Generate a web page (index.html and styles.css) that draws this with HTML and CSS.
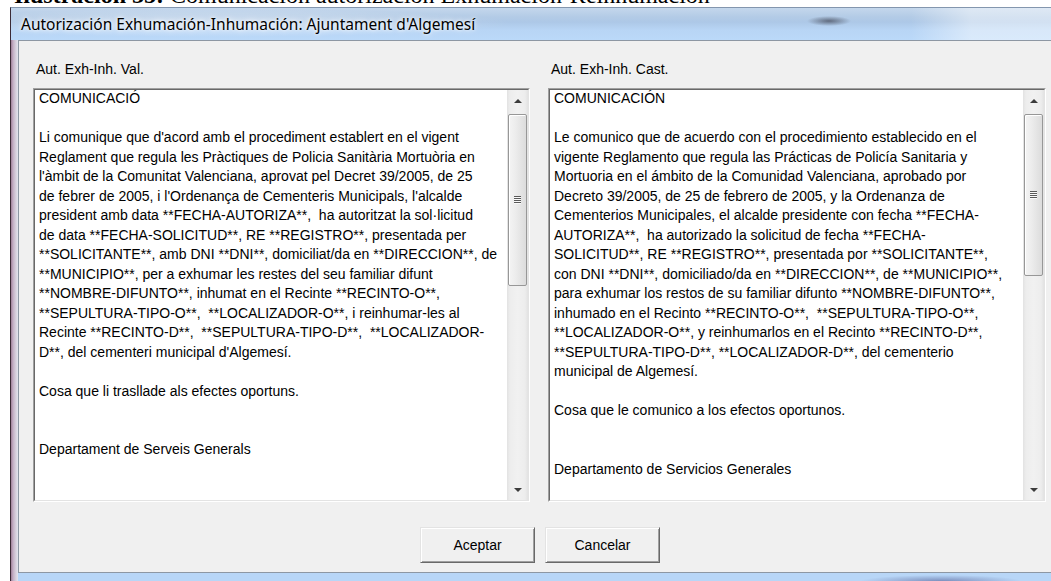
FILE: index.html
```html
<!DOCTYPE html>
<html lang="es">
<head>
<meta charset="utf-8">
<title>Autorización Exhumación-Inhumación</title>
<link rel="stylesheet" href="styles.css">
</head>
<body>
<div class="caption"><p><b>Ilustración 35:</b> Comunicación autorización Exhumación-Reinhumación</p></div>
<div class="window">
  <div class="titlebar"><span class="title">Autorización Exhumación-Inhumación: Ajuntament d'Algemesí</span></div>
  <div class="frame">
    <div class="client">
      <div class="panels">
        <div class="panel">
          <div class="field-label">Aut. Exh-Inh. Val.</div>
          <div class="memo">
            <div class="memo-inner">
<div class="memo-text">COMUNICACIÓ

Li comunique que d'acord amb el procediment establert en el vigent
Reglament que regula les Pràctiques de Policia Sanitària Mortuòria en
l'àmbit de la Comunitat Valenciana, aprovat pel Decret 39/2005, de 25
de febrer de 2005, i l'Ordenança de Cementeris Municipals, l'alcalde
president amb data **FECHA-AUTORIZA**,  ha autoritzat la sol·licitud
de data **FECHA-SOLICITUD**, RE **REGISTRO**, presentada per
**SOLICITANTE**, amb DNI **DNI**, domiciliat/da en **DIRECCION**, de
**MUNICIPIO**, per a exhumar les restes del seu familiar difunt
**NOMBRE-DIFUNTO**, inhumat en el Recinte **RECINTO-O**,
**SEPULTURA-TIPO-O**,  **LOCALIZADOR-O**, i reinhumar-les al
Recinte **RECINTO-D**,  **SEPULTURA-TIPO-D**,  **LOCALIZADOR-
D**, del cementeri municipal d'Algemesí.

Cosa que li trasllade als efectes oportuns.


Departament de Serveis Generals</div>
              <div class="scrollbar">
                <div class="sb-btn up"></div>
                <div class="sb-track"><div class="sb-thumb long"><span class="grip"></span></div></div>
                <div class="sb-btn down"></div>
              </div>
            </div>
          </div>
        </div>
        <div class="panel">
          <div class="field-label">Aut. Exh-Inh. Cast.</div>
          <div class="memo">
            <div class="memo-inner">
<div class="memo-text">COMUNICACIÓN

Le comunico que de acuerdo con el procedimiento establecido en el
vigente Reglamento que regula las Prácticas de Policía Sanitaria y
Mortuoria en el ámbito de la Comunidad Valenciana, aprobado por
Decreto 39/2005, de 25 de febrero de 2005, y la Ordenanza de
Cementerios Municipales, el alcalde presidente con fecha **FECHA-
AUTORIZA**,  ha autorizado la solicitud de fecha **FECHA-
SOLICITUD**, RE **REGISTRO**, presentada por **SOLICITANTE**,
con DNI **DNI**, domiciliado/da en **DIRECCION**, de **MUNICIPIO**,
para exhumar los restos de su familiar difunto **NOMBRE-DIFUNTO**,
inhumado en el Recinto **RECINTO-O**,  **SEPULTURA-TIPO-O**,
**LOCALIZADOR-O**, y reinhumarlos en el Recinto **RECINTO-D**,
**SEPULTURA-TIPO-D**, **LOCALIZADOR-D**, del cementerio
municipal de Algemesí.

Cosa que le comunico a los efectos oportunos.


Departamento de Servicios Generales</div>
              <div class="scrollbar">
                <div class="sb-btn up"></div>
                <div class="sb-track"><div class="sb-thumb short"><span class="grip"></span></div></div>
                <div class="sb-btn down"></div>
              </div>
            </div>
          </div>
        </div>
      </div>
      <div class="buttons">
        <button class="btn" type="button">Aceptar</button>
        <button class="btn" type="button">Cancelar</button>
      </div>
    </div>
  </div>
</div>
</body>
</html>
```

FILE: styles.css
```css
* { box-sizing: border-box; }

html, body { margin: 0; padding: 0; }

body {
  width: 1051px;
  height: 581px;
  overflow: hidden;
  background: #fff;
  font-family: "Liberation Sans", Arial, sans-serif;
  color: #000;
}

/* Document caption above the dialog; only its lower edge shows */
.caption {
  height: 7px;
  overflow: hidden;
  padding-left: 14px;
}
.caption p {
  margin: -17px 0 0;
  font: 24px/24px "Liberation Serif", "Times New Roman", serif;
  white-space: nowrap;
}

/* Aero window */
.window {
  margin-left: 10px;
  width: 1060px;
  border-left: 1px solid #3b2a36;
  border-top: 1px solid #8396ae;
  background: #bcd8f6;
}

.titlebar {
  height: 32px;
  display: flex;
  align-items: center;
  padding-left: 10px;
  background:
    radial-gradient(ellipse 22px 5px at 818px 13px, rgba(70, 76, 92, 0.75), rgba(70, 76, 92, 0) 100%),
    radial-gradient(ellipse 300px 14px at 200px 15px, rgba(255, 255, 255, 0.45), rgba(255, 255, 255, 0) 100%),
    linear-gradient(to right, rgba(255, 255, 255, 0) 0, rgba(255, 255, 255, 0) 900px, rgba(255, 255, 255, 0.45) 960px),
    linear-gradient(to bottom, #c4d7ec 0, #b3cbe6 9px, #adc8e7 14px, #b8d5f5 22px, #bbd9f9 32px);
}

.title {
  font-family: "Noto Sans", "Open Sans", sans-serif;
  font-size: 15.5px;
  color: #000;
  text-shadow: 0 0 6px #fff, 0 0 3px rgba(255, 255, 255, 0.9);
}

.frame {
  padding: 0 0 8px 7px;
  background:
    linear-gradient(to right, #9e7f98 0, #c3aec4 2px, #d9d2df 5px, #e2e4ee 7px) left top / 7px 100% no-repeat,
    radial-gradient(ellipse 80px 6px at 930px 100%, rgba(110, 126, 175, 0.8), rgba(110, 126, 175, 0) 100%),
    linear-gradient(to bottom, #bad7f6 0, #b8d6f7 100%);
}

.client {
  width: 1044px;
  border: 1px solid #8d97a3;
  background: #f0f0f0;
  padding: 20px 0 9px;
  font-size: 14px;
}

.panels {
  display: grid;
  grid-template-columns: 497px 498px;
  column-gap: 18px;
  padding-left: 14px;
}

.field-label {
  line-height: 16px;
  padding-left: 3px;
  margin-bottom: 11px;
}

/* Sunken multi-line edit box */
.memo {
  height: 414px;
  border: 1px solid;
  border-color: #a0a0a0 #ffffff #ffffff #a0a0a0;
}
.memo-inner {
  height: 100%;
  display: flex;
  border: 1px solid;
  border-color: #696969 #e3e3e3 #e3e3e3 #696969;
  background: #fff;
}
.memo-text {
  flex: 1;
  white-space: pre;
  overflow: hidden;
  line-height: 19.5px;
  padding-left: 4px;
  margin-top: -1px;
}

/* Vertical scroll bar */
.scrollbar {
  width: 21px;
  display: flex;
  flex-direction: column;
  background: linear-gradient(to right, #e2e2e2 0, #ededed 3px, #f1f1f1 50%, #ededed calc(100% - 3px), #e2e2e2 100%);
}
.sb-btn {
  height: 21px;
  display: flex;
  align-items: center;
  justify-content: center;
}
.sb-btn::before {
  content: "";
  border-left: 4px solid transparent;
  border-right: 4px solid transparent;
}
.sb-btn.up::before { border-bottom: 4px solid #3c3c3c; }
.sb-btn.down::before { border-top: 4px solid #3c3c3c; }

.sb-track {
  flex: 1;
  padding: 3px 1px 0;
}
.sb-thumb {
  border: 1px solid #979797;
  border-radius: 2px;
  background: linear-gradient(to right, #f4f4f4 0, #ececec 40%, #dcdcdc 100%);
  box-shadow: inset 1px 1px 0 #fff;
  display: flex;
  align-items: center;
  justify-content: center;
}
.sb-thumb.long { height: 172px; }
.sb-thumb.short { height: 162px; }
.grip {
  width: 7px;
  height: 8px;
  background: repeating-linear-gradient(to bottom, #5a5a5a 0, #5a5a5a 1px, #fafafa 1px, #fafafa 2px);
}

/* Dialog buttons */
.buttons {
  display: flex;
  justify-content: center;
  gap: 10px;
  margin-top: 25px;
}
.btn {
  width: 115px;
  height: 36px;
  padding: 0;
  font: 14px "Liberation Sans", Arial, sans-serif;
  color: #000;
  background: #f0f0f0;
  border: 1px solid;
  border-color: #e3e3e3 #696969 #696969 #e3e3e3;
  box-shadow: inset 1px 1px 0 #fff, inset -1px -1px 0 #a0a0a0;
}
```
